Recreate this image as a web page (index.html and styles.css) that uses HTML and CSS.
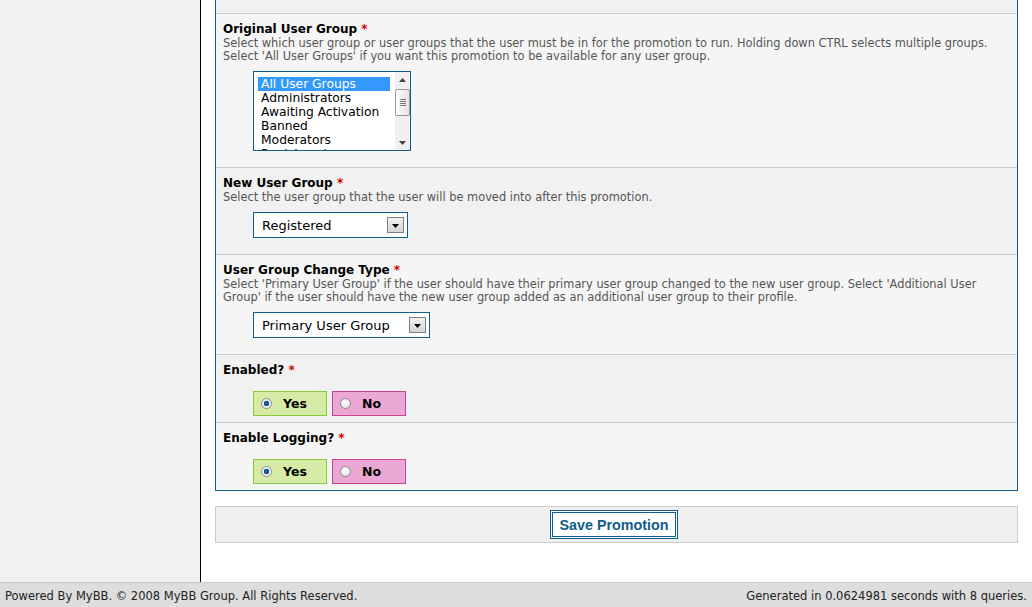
FILE: index.html
```html
<!DOCTYPE html>
<html>
<head>
<meta charset="utf-8">
<link rel="stylesheet" href="styles.css">
</head>
<body>
<div class="page">
  <div class="layout">
    <div class="sidebar"></div>
    <div class="main">
      <div class="form-container">
        <div class="row alt top-sliver"></div>
        <div class="row">
          <label class="label">Original User Group <span class="req">*</span></label>
          <div class="desc">Select which user group or user groups that the user must be in for the promotion to run. Holding down CTRL selects multiple groups.<br>Select 'All User Groups' if you want this promotion to be available for any user group.</div>
          <div class="control">
            <div class="listbox">
              <div class="options">
                <div class="opt selected">All User Groups</div>
                <div class="opt">Administrators</div>
                <div class="opt">Awaiting Activation</div>
                <div class="opt">Banned</div>
                <div class="opt">Moderators</div>
                <div class="opt">Registered</div>
              </div>
              <div class="scrollbar">
                <div class="sb-arrow"><svg width="7" height="4" viewBox="0 0 7 4"><path d="M0 4 L3.5 0 L7 4 Z" fill="#444"/></svg></div>
                <div class="sb-thumb"><span></span><span></span><span></span><span></span></div>
                <div class="sb-track"></div>
                <div class="sb-arrow"><svg width="7" height="4" viewBox="0 0 7 4"><path d="M0 0 L3.5 4 L7 0 Z" fill="#444"/></svg></div>
              </div>
            </div>
          </div>
        </div>
        <div class="row alt">
          <label class="label">New User Group <span class="req">*</span></label>
          <div class="desc">Select the user group that the user will be moved into after this promotion.</div>
          <div class="control">
            <div class="dropdown dd-short">
              <span class="dd-text">Registered</span>
              <span class="dd-btn"><svg width="7" height="4" viewBox="0 0 7 4"><path d="M0 0 L3.5 4 L7 0 Z" fill="#000"/></svg></span>
            </div>
          </div>
        </div>
        <div class="row">
          <label class="label">User Group Change Type <span class="req">*</span></label>
          <div class="desc">Select 'Primary User Group' if the user should have their primary user group changed to the new user group. Select 'Additional User Group' if the user should have the new user group added as an additional user group to their profile.</div>
          <div class="control">
            <div class="dropdown dd-long">
              <span class="dd-text">Primary User Group</span>
              <span class="dd-btn"><svg width="7" height="4" viewBox="0 0 7 4"><path d="M0 0 L3.5 4 L7 0 Z" fill="#000"/></svg></span>
            </div>
          </div>
        </div>
        <div class="row alt radio-row">
          <label class="label">Enabled? <span class="req">*</span></label>
          <div class="control radios">
            <label class="radio yes"><span class="dot on"></span>Yes</label>
            <label class="radio no"><span class="dot"></span>No</label>
          </div>
        </div>
        <div class="row radio-row last">
          <label class="label">Enable Logging? <span class="req">*</span></label>
          <div class="control radios">
            <label class="radio yes"><span class="dot on"></span>Yes</label>
            <label class="radio no"><span class="dot"></span>No</label>
          </div>
        </div>
      </div>
      <div class="form-buttons">
        <button class="submit">Save Promotion</button>
      </div>
    </div>
  </div>
  <div class="footer">
    <span>Powered By MyBB. © 2008 MyBB Group. All Rights Reserved.</span>
    <span>Generated in 0.0624981 seconds with 8 queries.</span>
  </div>
</div>
</body>
</html>
```

FILE: styles.css
```css
html, body {
  margin: 0;
  padding: 0;
}
body {
  font-family: "DejaVu Sans", Verdana, sans-serif;
  font-size: 11px;
  color: #000;
  background: #fff;
}
.page {
  display: flex;
  flex-direction: column;
  height: 607px;
  overflow: hidden;
}
.layout {
  display: flex;
  flex: 1;
  min-height: 0;
}
.sidebar {
  width: 200px;
  background: #f1f1f1;
  border-right: 1px solid #000;
  flex-shrink: 0;
}
.main {
  flex: 1;
  background: #fff;
  padding: 0 14px 0 14px;
}
.form-container {
  border: 1px solid #0f5c8e;
  border-top: none;
  background: #f5f5f5;
}
.row {
  background: #f5f5f5;
  border-bottom: 1px solid #ccc;
  padding: 8px 7px 16px 7px;
}
.row.alt {
  background: #f1f1f1;
}
.row.last {
  border-bottom: none;
}
.top-sliver {
  height: 14px;
  padding: 0;
  box-sizing: border-box;
}
.label {
  display: block;
  font-weight: bold;
  font-size: 12px;
  line-height: 15px;
}
.req {
  color: #c00;
}
.desc {
  color: #555;
  font-size: 11.4px;
  line-height: 13px;
}
.control {
  margin: 8px 0 0 30px;
}
.radio-row {
  padding-bottom: 6px;
}
.radio-row .control {
  margin-top: 13px;
}
/* listbox */
.listbox {
  display: flex;
  width: 158px;
  height: 80px;
  box-sizing: border-box;
  border: 1px solid #0f5c8e;
  background: #fff;
  overflow: hidden;
}
.options {
  flex: 1;
  padding: 5px 5px 0 4px;
  overflow: hidden;
  font-size: 12.3px;
  line-height: 14px;
}
.opt {
  padding-left: 3px;
  white-space: nowrap;
}
.opt.selected {
  background: #3399ff;
  color: #fff;
}
.scrollbar {
  width: 15px;
  display: flex;
  flex-direction: column;
  background: #f0f0f0;
}
.sb-arrow {
  height: 15px;
  display: flex;
  align-items: center;
  justify-content: center;
}
.sb-thumb {
  height: 27px;
  margin: 2px 0;
  box-sizing: border-box;
  border: 1px solid #999;
  border-radius: 2px;
  background: linear-gradient(to right, #fdfdfd, #e4e4e4);
  display: flex;
  flex-direction: column;
  justify-content: center;
  align-items: center;
  gap: 1px;
}
.sb-thumb span {
  display: block;
  width: 6px;
  height: 1px;
  background: #777;
}
.sb-track {
  flex: 1;
}
/* dropdown */
.dropdown {
  display: flex;
  align-items: center;
  justify-content: space-between;
  height: 26px;
  box-sizing: border-box;
  border: 1px solid #0f5c8e;
  background: #fff;
  padding: 0 3px 0 8px;
  font-size: 13px;
}
.dd-short { width: 155px; }
.dd-long { width: 177px; }
.dd-btn {
  width: 17px;
  height: 16px;
  box-sizing: border-box;
  border: 1px solid #808080;
  background: linear-gradient(#f2f2f2, #d4d4d4);
  display: flex;
  align-items: center;
  justify-content: center;
  padding-top: 2px;
}
/* radios */
.radios {
  display: flex;
  gap: 5px;
}
.radio {
  display: flex;
  align-items: center;
  width: 74px;
  height: 25px;
  box-sizing: border-box;
  font-weight: bold;
  font-size: 12.5px;
  padding-left: 7px;
  gap: 11px;
}
.radio.yes {
  background: #d6eca6;
  border: 1px solid #8dc63f;
}
.radio.no {
  background: #eba8d5;
  border: 1px solid #c84391;
}
.dot {
  width: 11px;
  height: 11px;
  border-radius: 50%;
  box-sizing: border-box;
  border: 1px solid #8a8a8a;
  background: radial-gradient(circle at 40% 40%, #fff, #ddd);
}
.dot.on {
  background: radial-gradient(circle, #1f6fb5 0, #0b4d8a 2.5px, #e8e8e8 3px, #fff 5px);
}
/* buttons */
.form-buttons {
  margin-top: 15px;
  height: 37px;
  box-sizing: border-box;
  background: #efefef;
  border: 1px solid #ccc;
  display: flex;
  align-items: center;
  justify-content: center;
}
.submit {
  font-family: "Liberation Sans", Arial, sans-serif;
  font-weight: bold;
  font-size: 14.3px;
  color: #0f5c8e;
  background: #fff;
  border: 3px double #0f5c8e;
  height: 29px;
  padding: 0 7px;
  margin-right: 5px;
}
.footer {
  height: 25px;
  box-sizing: border-box;
  background: #ddd;
  border-top: 1px solid #c8c8c8;
  display: flex;
  align-items: center;
  justify-content: space-between;
  padding: 2px 5px 0 5px;
  font-size: 11.5px;
  color: #222;
}
```
